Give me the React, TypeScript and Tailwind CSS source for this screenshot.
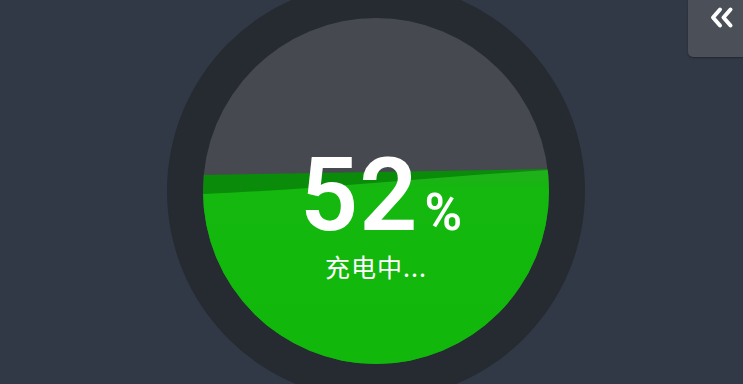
const percent = 52;

function Waves() {
  return (
    <svg className="absolute inset-0" width="346" height="346" viewBox="0 0 346 346">
      <defs>
        <linearGradient id="front" x1="0" y1="0" x2="0" y2="1">
          <stop offset="0" stopColor="#21af1d" />
          <stop offset="0.1" stopColor="#14b80e" />
          <stop offset="1" stopColor="#11b70b" />
        </linearGradient>
      </defs>
      <path d="M0 157 L346 151 L346 346 L0 346 Z" fill="#0a8b09" />
      <path d="M0 176 C 120 171, 230 159, 346 152 L346 346 L0 346 Z" fill="url(#front)" />
    </svg>
  );
}

export default function App() {
  return (
    <div className="relative w-[743px] h-[384px] overflow-hidden bg-[#323946] flex items-center justify-center pl-[9px] pb-[2px]">
      <div className="shrink-0 w-[418px] h-[418px] rounded-full bg-[#262a31] flex items-center justify-center">
        <div className="relative w-[346px] h-[346px] rounded-full overflow-hidden bg-[#46494f]">
          <Waves />
          <div className="relative flex flex-col items-center pt-[138px] text-white">
            <div className="flex items-baseline leading-[78px] pl-[10px]">
              <span className="text-[102px] font-semibold font-['Roboto',sans-serif] tracking-[1px]">{percent}</span>
              <span className="ml-[6px] text-[51px] font-semibold font-['Roboto',sans-serif]">%</span>
            </div>
            <p className="mt-[1px] leading-[26px] text-[25px] font-['Noto_Sans_CJK_SC',sans-serif] tracking-[1px]">充电中...</p>
          </div>
        </div>
      </div>

      <button className="absolute top-0 right-0 w-[55px] h-[57px] rounded-bl-[5px] bg-[#4a4f58] shadow-[0_1px_2px_rgba(0,0,0,0.35)] flex items-start justify-end pt-[5px] pr-[8px]">
        <svg width="27" height="25" viewBox="0 0 27 25" fill="none" stroke="white" strokeWidth="4" strokeLinecap="round" strokeLinejoin="round">
          <polyline points="12,4.5 5,12.5 12,20.5" />
          <polyline points="22.5,4.5 15.5,12.5 22.5,20.5" />
        </svg>
      </button>
    </div>
  );
}
